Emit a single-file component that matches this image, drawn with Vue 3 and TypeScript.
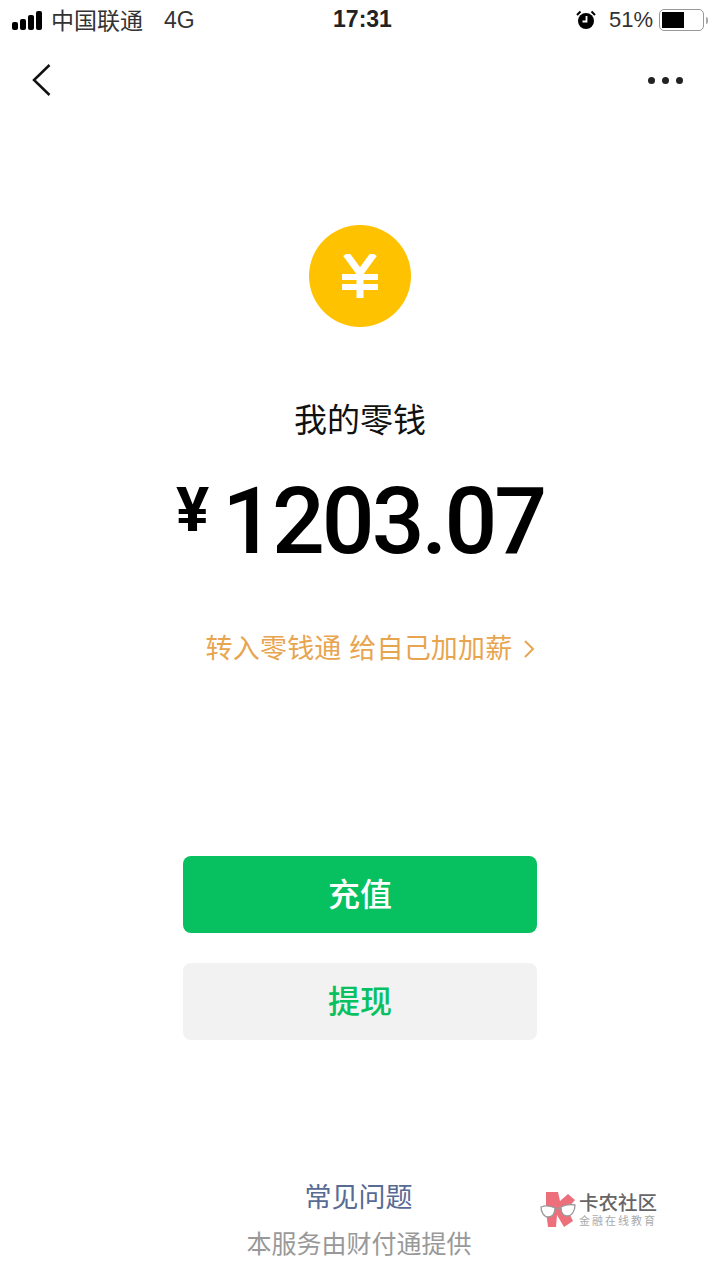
<script setup lang="ts">
const bars = [8, 11, 15, 19]
const balance = '1203.07'
</script>

<template>
  <div class="page">
    <header class="status">
      <div class="status-left">
        <span class="signal">
          <i v-for="h in bars" :key="h" :style="{ height: h + 'px' }"></i>
        </span>
        <span class="carrier">中国联通</span>
        <span class="net">4G</span>
      </div>
      <div class="clock">17:31</div>
      <div class="status-right">
        <svg class="alarm" width="20" height="20" viewBox="0 0 20 20">
          <circle cx="10" cy="11" r="8" fill="#000" />
          <path d="M10.500 6V11.500H6.500" fill="none" stroke="#fff" stroke-width="1.800" />
          <path d="M1 5 4.500 1.500M19 5 15.500 1.500" fill="none" stroke="#000" stroke-width="2" />
        </svg>
        <span class="pct">51%</span>
        <span class="battery"><i></i></span>
        <span class="battery-tip"></span>
      </div>
    </header>

    <nav class="nav">
      <svg width="22" height="36" viewBox="0 0 22 36">
        <path d="M19.500 3 4 18 19.500 33" fill="none" stroke="#111" stroke-width="2.500" />
      </svg>
      <span class="more"><i></i><i></i><i></i></span>
    </nav>

    <main class="main">
      <div class="coin">
        <svg width="36" height="44" viewBox="0 0 36 44">
          <path d="M4 0 18 19 32 0M18 18V44" fill="none" stroke="#fff" stroke-width="7" />
          <path d="M0 23H36M0 33H36" fill="none" stroke="#fff" stroke-width="6" />
        </svg>
      </div>
      <h1 class="title">我的零钱</h1>
      <div class="amount">
        <span class="yen">¥</span>
        <span class="value">{{ balance }}</span>
      </div>
      <div class="promo">
        <span>转入零钱通 给自己加加薪</span>
        <svg width="12" height="20" viewBox="0 0 12 20">
          <path d="M2 2 10 10 2 18" fill="none" stroke="#e8a550" stroke-width="2" />
        </svg>
      </div>
      <button class="btn btn-primary">充值</button>
      <button class="btn btn-secondary">提现</button>
      <a class="faq">常见问题</a>
      <p class="provider">本服务由财付通提供</p>
    </main>

    <!-- community watermark, sits over the page corner -->
    <div class="mark">
      <svg width="36" height="38" viewBox="0 0 36 38">
        <path d="M6 1H18L20 10 28 3 35 9 27 18 33 30 24 36 17 24 16 36H8L6 20Z" fill="#ee6f7c" />
        <path d="M1 16C6 14 11 15 15 17 15 22 13 26 8 26 4 26 1 21 1 16ZM21 16C25 14 30 13 35 14 35 20 32 25 27 25 23 25 21 21 21 16ZM15 18C17 17 19 17 21 18" fill="#fff" stroke="#999" stroke-width="1.300" />
      </svg>
      <div class="mark-text">
        <strong>卡农社区</strong>
        <small>金融在线教育</small>
      </div>
    </div>
  </div>
</template>

<style>
body {
  background: #fff;
}
</style>

<style scoped>
.page {
  position: relative;
  width: 720px;
  height: 1280px;
  overflow: hidden;
  background: #fff;
  color: #000;
  font-family: "Liberation Sans", "Noto Sans CJK SC", sans-serif;
}

.status {
  display: grid;
  grid-template-columns: 1fr auto 1fr;
  align-items: center;
  height: 40px;
  padding: 0 12px;
  box-sizing: border-box;
}
.status-left,
.status-right {
  display: flex;
  align-items: center;
}
.status-right {
  justify-content: flex-end;
  padding-right: 0;
}
.signal {
  display: flex;
  align-items: flex-end;
  gap: 2px;
  width: 32px;
  margin-right: 7px;
}
.signal i {
  width: 6px;
  border-radius: 2px;
  background: #000;
}
.carrier {
  margin-bottom: 3px;
  font-size: 23px;
  color: #333;
}
.net {
  margin-left: 21px;
  font-size: 23px;
  color: #333;
}
.clock {
  margin: 0 0 1px 5px;
  font-size: 23px;
  font-weight: 700;
  color: #222;
}
.alarm {
  margin-right: 13px;
}
.pct {
  margin-right: 6px;
  font-size: 22px;
  color: #333;
}
.battery {
  display: block;
  width: 45px;
  height: 22px;
  padding: 2px;
  box-sizing: border-box;
  border: 1.500px solid #999;
  border-radius: 5px;
}
.battery i {
  display: block;
  width: 22px;
  height: 100%;
  background: #000;
}
.battery-tip {
  width: 2px;
  height: 7px;
  margin-left: 2px;
  border-radius: 0 2px 2px 0;
  background: #aaa;
}

.nav {
  display: flex;
  align-items: center;
  justify-content: space-between;
  height: 80px;
  padding: 0 37px 0 30px;
}
.more {
  display: flex;
  gap: 7px;
}
.more i {
  width: 7px;
  height: 7px;
  border-radius: 50%;
  background: #222;
}

.main {
  display: flex;
  flex-direction: column;
  align-items: center;
  padding-top: 105px;
}
.coin {
  display: flex;
  align-items: center;
  justify-content: center;
  width: 102px;
  height: 102px;
  border-radius: 50%;
  background: #fec200;
}
.title {
  margin: 74px 0 0;
  font-size: 33px;
  line-height: 40px;
  font-weight: 400;
  color: #111;
}
.amount {
  display: flex;
  align-items: flex-start;
  margin-top: 31px;
  height: 100px;
}
.yen {
  margin: 3px 13px 0 0;
  font-family: Roboto, sans-serif;
  font-size: 62px;
  line-height: 70px;
  font-weight: 700;
}
.value {
  font-family: Roboto, sans-serif;
  font-size: 93px;
  line-height: 100px;
  font-weight: 500;
  letter-spacing: -3px;
}
.promo {
  display: flex;
  align-items: center;
  gap: 11px;
  margin: 59px 0 0 21px;
  font-size: 27px;
  line-height: 36px;
  letter-spacing: 0.200px;
  color: #e8a550;
}
.btn {
  display: block;
  width: 354px;
  height: 77px;
  padding: 0 0 5px;
  border: 0;
  border-radius: 8px;
  font-family: inherit;
  font-size: 32px;
  font-weight: 500;
}
.btn-primary {
  margin-top: 189px;
  background: #07c160;
  color: #fff;
}
.btn-secondary {
  margin-top: 30px;
  background: #f2f2f2;
  color: #07c160;
}
.faq {
  margin: 140px 3px 0 0;
  font-size: 27px;
  line-height: 36px;
  color: #576b95;
}
.provider {
  margin: 10px 2px 0 0;
  font-size: 25px;
  line-height: 36px;
  color: #999;
}

.mark {
  position: absolute;
  left: 540px;
  top: 1191px;
  display: flex;
  align-items: center;
  gap: 3px;
}
.mark-text {
  display: flex;
  flex-direction: column;
}
.mark-text strong {
  font-size: 19.500px;
  line-height: 22px;
  font-weight: 500;
  color: #666;
}
.mark-text small {
  font-size: 11px;
  line-height: 14px;
  letter-spacing: 2px;
  color: #aaa;
}
</style>
